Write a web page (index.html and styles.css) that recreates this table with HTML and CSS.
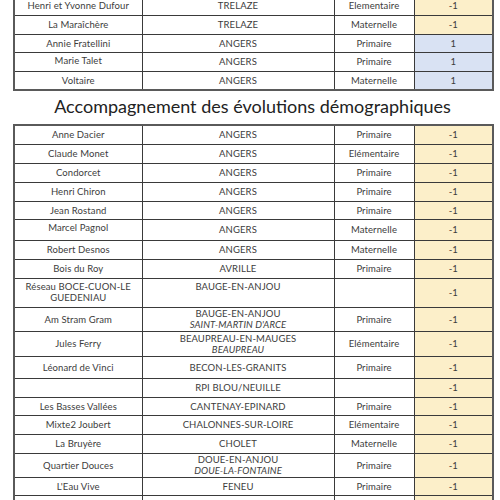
FILE: index.html
```html
<!DOCTYPE html>
<html lang="fr">
<head>
<meta charset="utf-8">
<link rel="stylesheet" href="styles.css">
</head>
<body>
<div class="page">
  <table class="grid first">
    <colgroup><col class="c1"><col class="c2"><col class="c3"><col class="c4"></colgroup>
    <tr class="h19"><td>Henri et Yvonne Dufour</td><td>TRELAZE</td><td>Elementaire</td><td class="y">-1</td></tr>
    <tr class="h19"><td>La Maraîchère</td><td>TRELAZE</td><td>Maternelle</td><td class="y">-1</td></tr>
    <tr class="h18"><td>Annie Fratellini</td><td>ANGERS</td><td>Primaire</td><td class="b">1</td></tr>
    <tr class="h19"><td class="top">Marie Talet</td><td>ANGERS</td><td>Primaire</td><td class="b">1</td></tr>
    <tr class="h19"><td>Voltaire</td><td>ANGERS</td><td>Maternelle</td><td class="b">1</td></tr>
  </table>
  <h2 class="title">Accompagnement des évolutions démographiques</h2>
  <table class="grid">
    <colgroup><col class="c1"><col class="c2"><col class="c3"><col class="c4"></colgroup>
    <tr class="h19"><td>Anne Dacier</td><td>ANGERS</td><td>Primaire</td><td class="y">-1</td></tr>
    <tr class="h19"><td>Claude Monet</td><td>ANGERS</td><td>Elémentaire</td><td class="y">-1</td></tr>
    <tr class="h19"><td>Condorcet</td><td>ANGERS</td><td>Primaire</td><td class="y">-1</td></tr>
    <tr class="h19"><td>Henri Chiron</td><td>ANGERS</td><td>Primaire</td><td class="y">-1</td></tr>
    <tr class="h18"><td>Jean Rostand</td><td>ANGERS</td><td>Primaire</td><td class="y">-1</td></tr>
    <tr class="h21"><td class="top">Marcel Pagnol</td><td>ANGERS</td><td>Maternelle</td><td class="y">-1</td></tr>
    <tr class="h19"><td>Robert Desnos</td><td>ANGERS</td><td>Maternelle</td><td class="y">-1</td></tr>
    <tr class="h19"><td>Bois du Roy</td><td>AVRILLE</td><td>Primaire</td><td class="y">-1</td></tr>
    <tr class="h29"><td class="top">Réseau BOCE-CUON-LE<br>GUEDENIAU</td><td class="top">BAUGE-EN-ANJOU</td><td></td><td class="y">-1</td></tr>
    <tr class="h24"><td>Am Stram Gram</td><td>BAUGE-EN-ANJOU<br><i>SAINT-MARTIN D'ARCE</i></td><td>Primaire</td><td class="y">-1</td></tr>
    <tr class="h25"><td>Jules Ferry</td><td>BEAUPREAU-EN-MAUGES<br><i>BEAUPREAU</i></td><td>Elémentaire</td><td class="y">-1</td></tr>
    <tr class="h22"><td>Léonard de Vinci</td><td>BECON-LES-GRANITS</td><td>Primaire</td><td class="y">-1</td></tr>
    <tr class="h19"><td></td><td>RPI BLOU/NEUILLE</td><td></td><td class="y">-1</td></tr>
    <tr class="h18"><td>Les Basses Vallées</td><td>CANTENAY-EPINARD</td><td>Primaire</td><td class="y">-1</td></tr>
    <tr class="h19"><td>Mixte2 Joubert</td><td>CHALONNES-SUR-LOIRE</td><td>Elémentaire</td><td class="y">-1</td></tr>
    <tr class="h19"><td>La Bruyère</td><td>CHOLET</td><td>Maternelle</td><td class="y">-1</td></tr>
    <tr class="h24"><td>Quartier Douces</td><td>DOUE-EN-ANJOU<br><i>DOUE-LA-FONTAINE</i></td><td>Primaire</td><td class="y">-1</td></tr>
    <tr class="h18"><td>L'Eau Vive</td><td>FENEU</td><td>Primaire</td><td class="y">-1</td></tr>
    <tr class="h24"><td></td><td class="top">GENNES-VAL-DE-LOIRE</td><td></td><td class="y">-1</td></tr>
  </table>
</div>
</body>
</html>
```
FILE: styles.css
```css
html, body {
  margin: 0;
  padding: 0;
  background: #ffffff;
  overflow: hidden;
}

body {
  font-family: Lato, "Open Sans", "DejaVu Sans", sans-serif;
  color: #3c3c3c;
}

.page {
  padding-left: 13px;
  width: 479px;
}

.grid {
  border-collapse: collapse;
  table-layout: fixed;
  width: 479px;
  border: 2px solid #5a5a5a;
  font-size: 9.5px;
  letter-spacing: 0.1px;
}

.first {
  margin-top: -5px;
}

.c1 { width: 128px; }
.c2 { width: 192px; }
.c3 { width: 80px; }
.c4 { width: 79px; }

.grid td {
  border: 1px solid #3a3a3a;
  text-align: center;
  vertical-align: middle;
  padding: 0 2px;
  line-height: 11px;
}

.grid td.top {
  vertical-align: top;
  padding-top: 2px;
}

.grid i {
  font-style: italic;
}

.y { background: #fcefc9; }
.b { background: #d9e2f3; }

.h18 { height: 18px; }
.h19 { height: 19px; }
.h21 { height: 21px; }
.h22 { height: 22px; }
.h24 { height: 24px; }
.h25 { height: 25px; }
.h29 { height: 29px; }

.title {
  margin: 5px 0 7px;
  font-size: 18px;
  font-weight: normal;
  line-height: 21px;
  text-align: center;
  color: #222222;
}
```
